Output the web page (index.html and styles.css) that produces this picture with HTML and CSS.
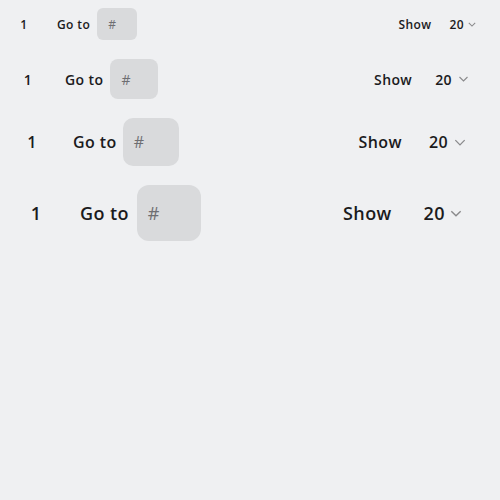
FILE: index.html
```html
<!DOCTYPE html>
<html>
<head>
<meta charset="utf-8">
<link rel="stylesheet" href="styles.css">
</head>
<body>
<div class="stack">
  <div class="pager sm">
    <div class="page">1</div>
    <div class="goto"><span class="label">Go to</span><div class="input">#</div></div>
    <div class="show"><span class="label">Show</span><div class="select"><span class="val">20</span><svg class="chev" viewBox="0 0 10 6"><path d="M1 1 L5 5 L9 1" fill="none" stroke="#8a8a8c" stroke-width="1.3"/></svg></div></div>
  </div>
  <div class="pager md">
    <div class="page">1</div>
    <div class="goto"><span class="label">Go to</span><div class="input">#</div></div>
    <div class="show"><span class="label">Show</span><div class="select"><span class="val">20</span><svg class="chev" viewBox="0 0 10 6"><path d="M1 1 L5 5 L9 1" fill="none" stroke="#8a8a8c" stroke-width="1.1"/></svg></div></div>
  </div>
  <div class="pager lg">
    <div class="page">1</div>
    <div class="goto"><span class="label">Go to</span><div class="input">#</div></div>
    <div class="show"><span class="label">Show</span><div class="select"><span class="val">20</span><svg class="chev" viewBox="0 0 10 6"><path d="M1 1 L5 5 L9 1" fill="none" stroke="#8a8a8c" stroke-width="1.1"/></svg></div></div>
  </div>
  <div class="pager xl">
    <div class="page">1</div>
    <div class="goto"><span class="label">Go to</span><div class="input">#</div></div>
    <div class="show"><span class="label">Show</span><div class="select"><span class="val">20</span><svg class="chev" viewBox="0 0 10 6"><path d="M1 1 L5 5 L9 1" fill="none" stroke="#8a8a8c" stroke-width="1.2"/></svg></div></div>
  </div>
</div>
</body>
</html>
```
FILE: styles.css
```css
html, body { background: #eff0f2; }
body {
  margin: 8px;
  font-family: "Open Sans", "Noto Sans", sans-serif;
  font-weight: 600;
  letter-spacing: 0.025em;
  color: #1b1b1d;
}
.stack { display: flex; flex-direction: column; gap: 19px; }
.pager { display: flex; align-items: center; }
.page { display: flex; align-items: center; justify-content: center; flex: none; }
.goto { display: flex; align-items: center; gap: 8px; }
.input {
  background: #d9dadc;
  color: #6e6e72;
  font-weight: 400;
  letter-spacing: 0;
  display: flex;
  align-items: center;
  box-sizing: border-box;
}
.show { margin-left: auto; display: flex; align-items: center; }
.select { display: flex; align-items: center; }
.chev { display: block; }

.sm { font-size: 12px; }
.sm .page { width: 32px; height: 32px; }
.sm .goto { margin-left: 17px; gap: 7px; }
.sm .input { width: 40px; height: 32px; border-radius: 6px; padding-left: 11px; }
.sm .show { margin-right: 16px; }
.sm .select { margin-left: 18px; gap: 4px; }
.sm .chev { width: 8px; height: 5px; }

.md { font-size: 14px; }
.md .page { width: 40px; height: 40px; }
.md .goto { margin-left: 17px; gap: 7px; }
.md .input { width: 48px; height: 40px; border-radius: 8px; padding-left: 11px; }
.md .show { margin-right: 23px; }
.md .select { margin-left: 23px; gap: 6px; }
.md .chev { width: 11px; height: 6px; }

.lg { font-size: 16px; }
.lg .page { width: 48px; height: 48px; }
.lg .goto { margin-left: 17px; gap: 6px; }
.lg .input { width: 56px; height: 48px; border-radius: 10px; padding-left: 11px; }
.lg .show { margin-right: 26px; }
.lg .select { margin-left: 27px; gap: 6px; }
.lg .chev { width: 12px; height: 7px; }

.xl { font-size: 18px; }
.xl .page { width: 56px; height: 56px; }
.xl .goto { margin-left: 16px; }
.xl .input { width: 64px; height: 56px; border-radius: 12px; padding-left: 11px; }
.xl .show { margin-right: 30px; }
.xl .select { margin-left: 32px; gap: 5px; }
.xl .chev { width: 12px; height: 7px; }
```
